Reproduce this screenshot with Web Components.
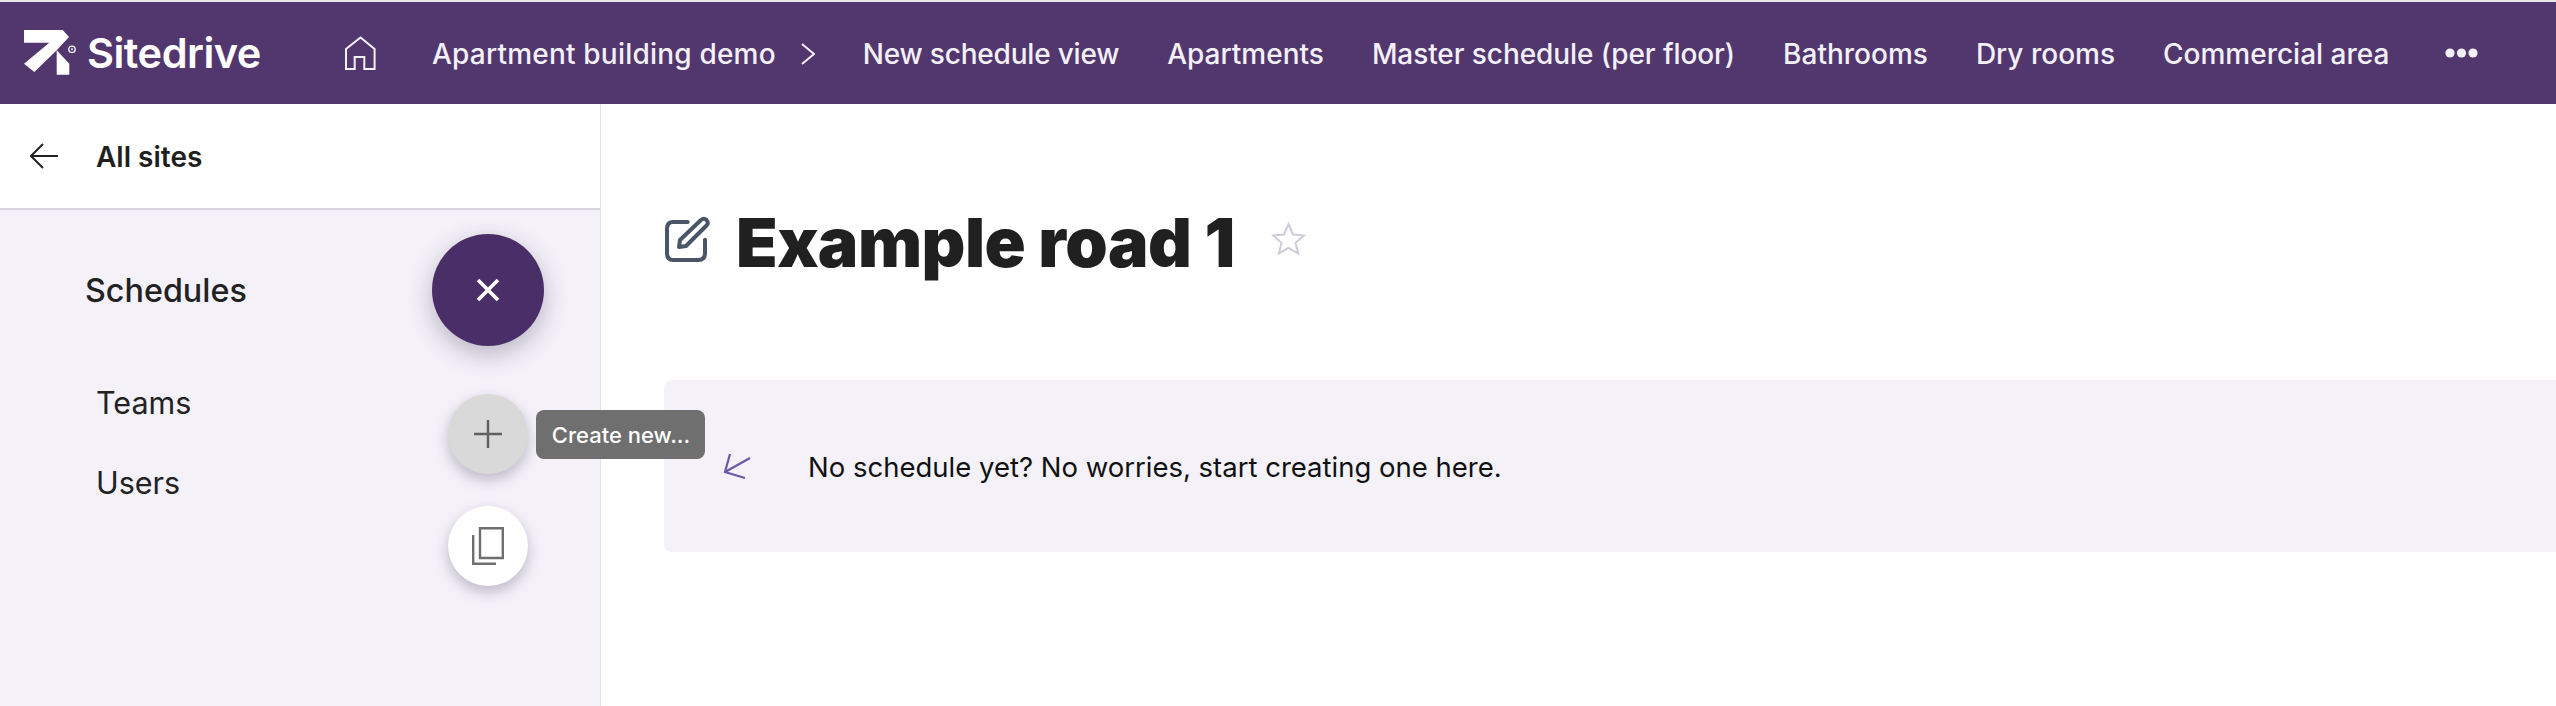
<!DOCTYPE html>
<html><head><meta charset="utf-8"><title>Sitedrive</title>
<style>
html,body{margin:0;padding:0;height:100%;overflow:hidden;background:#fff;font-family:Inter,"Liberation Sans",sans-serif}
body{border-top:2px solid #e8e6e8;box-sizing:border-box;width:2556px;height:706px}
</style></head><body>
<sd-app>
<sd-topbar slot="top"></sd-topbar>
<sd-sidebar slot="side"></sd-sidebar>
<sd-main slot="main"></sd-main>
</sd-app>
<script>
function def(name,html){customElements.define(name,class extends HTMLElement{constructor(){super();this.attachShadow({mode:'open'}).innerHTML=html}})}
def('sd-app',`<style>:host{display:grid;grid-template-rows:102px 1fr;grid-template-columns:601px 1fr;height:704px;position:relative;overflow:hidden}
::slotted([slot=top]){grid-column:1/3}</style><slot name="top"></slot><slot name="side"></slot><slot name="main"></slot>`);
def('sd-topbar',`<style>:host{display:flex;align-items:center;background:#52376f;color:#f3f0f7;font-size:28px;font-weight:500;white-space:nowrap}
.logo{display:flex;align-items:center;margin-left:24px;width:321px;flex:none;color:#fff}
.word{font-size:41.5px;font-weight:600;letter-spacing:-.5px;margin-left:11px;color:#fff;line-height:46px}
nav{display:flex;gap:48px;align-items:center;padding-top:2px}
.home{width:31px;margin-right:56px;flex:none;display:flex}
.bc{display:flex;align-items:center;gap:25px;letter-spacing:.2px}
.n{letter-spacing:-.2px}.m{letter-spacing:-.08px}
svg{display:block}
</style>
<div class="logo"><svg width="52" height="46" viewBox="0 0 52 46"><path fill="#fff" d="M0 0H38.7L45 7L32.7 20.3L45.3 33.7V44.7H32.7V20.3L10.3 42L0 33.7L25.3 12.7H0Z"/><circle cx="48" cy="19.3" r="3.2" fill="none" stroke="#fff" stroke-width="1.3"/><circle cx="48" cy="19.3" r="1" fill="#fff"/></svg><span class="word">Sitedrive</span></div>
<div class="home"><svg width="31" height="35" viewBox="0 0 31 35" fill="none" stroke="#f3f0f7" stroke-width="2"><path d="M1 33V13L15.5 1.5L29.6 13V33H19.3V21H9.7V33Z"/></svg></div>
<nav>
<span class="bc">Apartment building demo<svg width="14" height="22" viewBox="0 0 14 22" fill="none" stroke="#f3f0f7" stroke-width="2"><path d="M1 1L13 11L1 21"/></svg></span>
<span class="n">New schedule view</span><span>Apartments</span><span class="m">Master schedule (per floor)</span><span>Bathrooms</span><span>Dry rooms</span><span>Commercial area</span>
<svg width="33" height="10" viewBox="0 0 33 10" fill="#f3f0f7" style="margin-left:8px;margin-top:-2px"><circle cx="5" cy="5" r="4.6"/><circle cx="16.5" cy="5" r="4.6"/><circle cx="28" cy="5" r="4.6"/></svg>
</nav>`);
def('sd-sidebar',`<style>:host{display:flex;flex-direction:column;background:#f4f1f9;border-right:1px solid #e4e2e8;position:relative;color:#222}
.head{display:flex;align-items:center;gap:38px;height:104px;padding-left:30px;background:#fff;border-bottom:2px solid #d8d5de;font-size:28px;font-weight:600;color:#1f1f1f}
.head span{padding-top:2px}
.title{font-size:32.3px;font-weight:500;margin:62px 0 0 85px;line-height:38px}
ul{list-style:none;margin:75px 0 0 96px;padding:0;font-size:30.5px;display:flex;flex-direction:column;gap:44px;line-height:36px}
</style>
<div class="head"><svg width="28" height="26" viewBox="0 0 28 26" fill="none" stroke="#222" stroke-width="2"><path d="M28 13H2M13 1L1 13L13 25"/></svg><span>All sites</span></div>
<div class="title">Schedules</div>
<ul><li>Teams</li><li>Users</li></ul>
<sd-fab></sd-fab>`);
def('sd-fab',`<style>:host{position:absolute;left:0;top:0;display:block;width:0;height:0;z-index:5;font-family:Inter,sans-serif}
.b{position:absolute;border-radius:50%;display:flex;align-items:center;justify-content:center}
.m{left:432px;top:130px;width:112px;height:112px;background:#4a2e68;box-shadow:0 8px 24px rgba(50,40,70,.3)}
.p{left:448px;top:290px;width:80px;height:80px;background:#d9d9d9;box-shadow:0 6px 14px rgba(50,40,70,.28)}
.c{left:448px;top:402px;width:80px;height:80px;background:#fff;box-shadow:0 6px 14px rgba(50,40,70,.28)}
.t{position:absolute;left:536px;top:306px;height:49px;width:169px;box-sizing:border-box;background:#6f6f6f;border-radius:8px;color:#fff;font-size:22px;font-weight:500;display:flex;align-items:center;justify-content:center;white-space:nowrap;padding-left:1px}
</style>
<div class="b m"><svg width="24" height="24" viewBox="0 0 24 24" stroke="#fff" stroke-width="3.6"><path d="M2 2L22 22M22 2L2 22"/></svg></div>
<div class="b p"><svg width="28" height="28" viewBox="0 0 28 28" stroke="#5f5f5f" stroke-width="2.4"><path d="M14 0V28M0 14H28"/></svg></div>
<div class="b c"><svg width="32" height="38" viewBox="0 0 32 38" fill="none" stroke="#6f6f6f" stroke-width="2.4"><path d="M8 1.2H30.8V31H8Z"/><path d="M1.2 8V36.8H24"/></svg></div>
<div class="t">Create new...</div>`);
def('sd-main',`<style>:host{display:block;position:relative;background:#fff;padding-left:63px;overflow:hidden}
.h{display:flex;align-items:center;height:52px;margin-top:112px;color:#202020}
.pen{margin:-7px 0 0 1px;flex:none}
h1{margin:0 0 0 25px;font-size:68px;font-weight:900;letter-spacing:-.5px;line-height:52px;white-space:nowrap;color:#202020}
.star{margin-left:36px;margin-top:-8px}
.box{margin-top:112px;height:172px;background:#f4f1f9;border-radius:8px 0 0 8px;display:flex;align-items:center;font-size:27.5px;color:#111;padding-left:144px;position:relative}
.box span{padding-top:2px}
.arrow{position:absolute;left:58px;top:72px}
</style>
<div class="h"><svg class="pen" width="46" height="46" viewBox="0 0 46 46" fill="none" stroke="#4a5568" stroke-width="4" stroke-linecap="round" stroke-linejoin="round"><path d="M22.7 6H8Q2 6 2 12.7V37Q2 44 8 44H33.3Q40 44 40 37V23.7"/><path d="M14 31L15 24L36 4Q39 1.5 41.5 4Q44 7 41.5 9.5L21 30Z"/></svg>
<h1>Example road 1</h1>
<svg class="star" width="35" height="33" viewBox="0 0 35 33" fill="none" stroke="#cfcbd9" stroke-width="2"><path d="M17.5 2L22 12.5L33 13.5L24.5 20.8L27.2 31.5L17.5 25.8L7.8 31.5L10.5 20.8L2 13.5L13 12.5Z"/></svg></div>
<div class="box"><svg class="arrow" width="30" height="28" viewBox="0 0 30 28" fill="none" stroke="#6b58a8" stroke-width="2.2"><path d="M28 6L3 20M8 2L3 20L23 26"/></svg><span>No schedule yet? No worries, start creating one here.</span></div>`);
</script></body></html>
